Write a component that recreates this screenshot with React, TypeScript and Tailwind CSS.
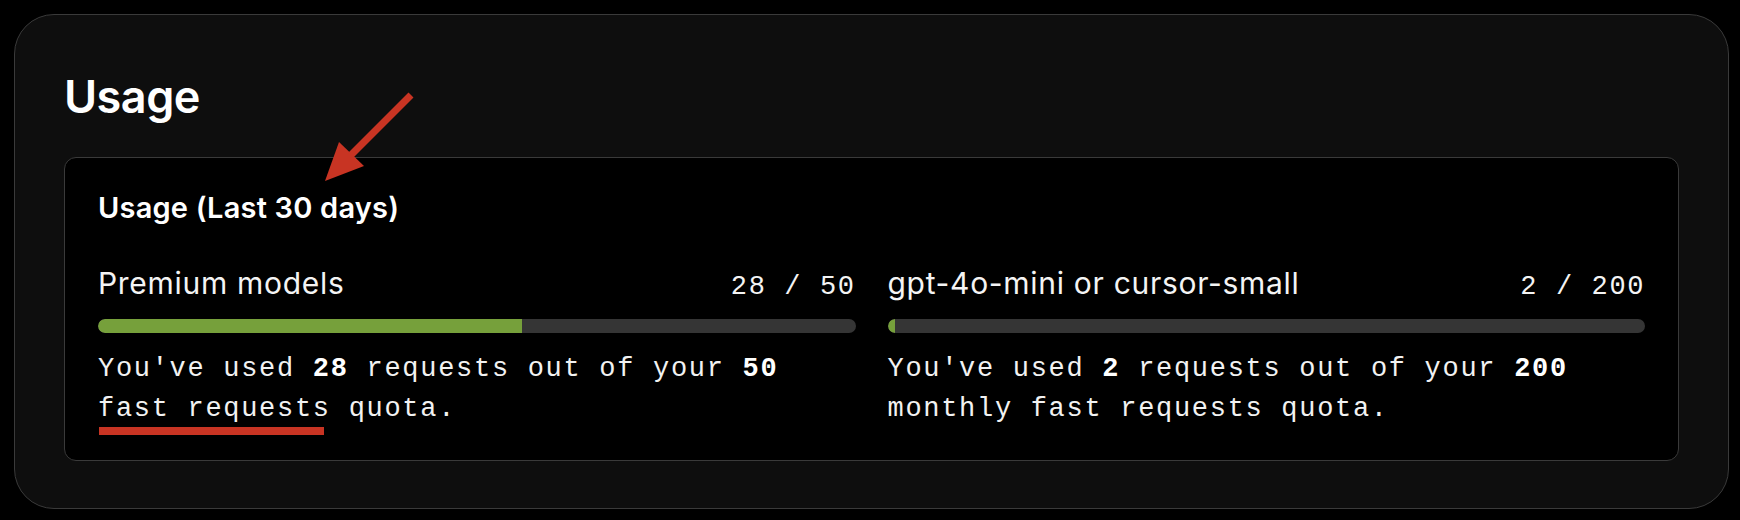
import React from "react";

const sans = { fontFamily: "Inter, 'Noto Sans', sans-serif" };
const mono = { fontFamily: "'Liberation Mono', 'DejaVu Sans Mono', monospace" };

type Meter = {
  label: string;
  used: number;
  total: number;
  suffix: string;
};

const meters: Meter[] = [
  { label: "Premium models", used: 28, total: 50, suffix: "fast requests quota." },
  { label: "gpt-4o-mini or cursor-small", used: 2, total: 200, suffix: "monthly fast requests quota." },
];

function UsageMeter({ m }: { m: Meter }) {
  const pct = (m.used / m.total) * 100;
  return (
    <div className="flex flex-col">
      <div className="flex items-baseline justify-between h-[28px]">
        <span className="text-[30px] leading-[28px] tracking-[0.7px] text-[#f4f4f4]" style={sans}>
          {m.label}
        </span>
        <span className="text-[27px] leading-[28px] tracking-[1.6px] text-[#f4f4f4]" style={mono}>
          {m.used} / {m.total}
        </span>
      </div>
      <div className="mt-[22px] h-[14px] w-full overflow-hidden rounded-full bg-[#353535]">
        <div className="h-full rounded-l-full bg-[#76a03b]" style={{ width: `${pct}%` }} />
      </div>
      <p className="mt-[16px] text-[27px] leading-[40px] tracking-[1.7px] text-[#f2f2f2]" style={mono}>
        You've used <span className="font-bold text-white">{m.used}</span> requests out of your{" "}
        <span className="font-bold text-white">{m.total}</span> {m.suffix}
      </p>
    </div>
  );
}

export default function App() {
  return (
    <div className="relative w-[1740px] h-[520px] bg-black pt-[14px] pl-[14px] pr-[11px] pb-[11px]">
      <div className="h-full rounded-[40px] border border-[#3a3a3a] bg-[#0e0e0e] px-[49px] pt-[60px]">
        <h1 className="text-[45px] leading-[44px] font-semibold tracking-[-0.5px] text-white" style={sans}>
          Usage
        </h1>
        <div className="mt-[38px] rounded-xl border border-[#3a3a3a] bg-black px-[33px] pt-[37px] pb-[31px]">
          <h2 className="text-[29px] leading-[26px] font-semibold tracking-[0.2px] text-white" style={sans}>
            Usage (Last 30 days)
          </h2>
          <div className="mt-[48px] grid grid-cols-2 gap-[32px]">
            {meters.map((m) => (
              <UsageMeter key={m.label} m={m} />
            ))}
          </div>
        </div>
      </div>

      {/* annotation overlay */}
      <svg className="pointer-events-none absolute left-0 top-0" width="1740" height="520">
        <line x1="411" y1="95" x2="347" y2="159" stroke="#c83423" strokeWidth="7" />
        <polygon points="325,181 364,166 339,142" fill="#c83423" />
        <rect x="99" y="427" width="225" height="8" fill="#c83423" />
      </svg>
    </div>
  );
}
